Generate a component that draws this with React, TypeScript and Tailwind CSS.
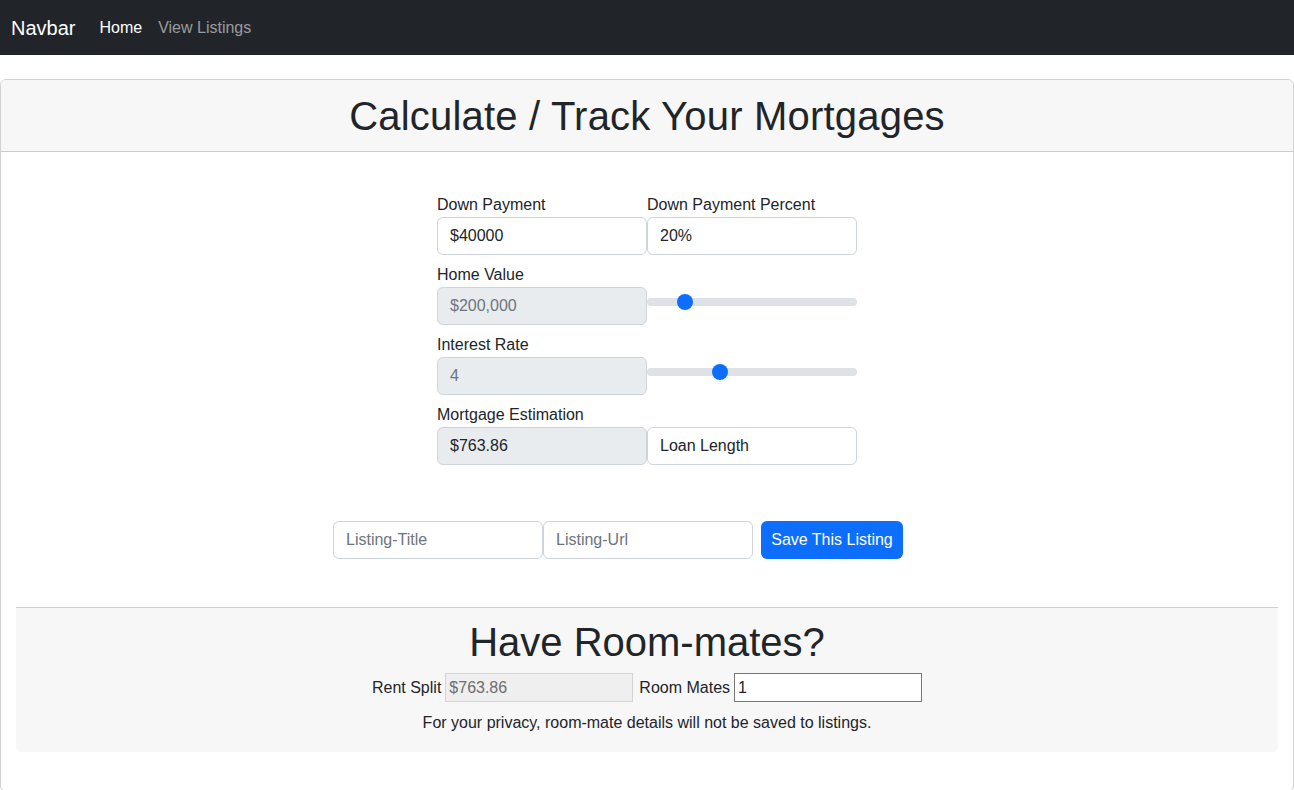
import React from "react";

const font = { fontFamily: '"Liberation Sans", Arial, sans-serif' };

function Slider({ pos }: { pos: number }) {
  return (
    <div className="relative h-[38px] w-[210px] pt-[11px]">
      <div className="h-2 w-full rounded-full bg-[#dee2e6]" />
      <div
        className="absolute top-[7px] h-4 w-4 rounded-full bg-[#0d6efd]"
        style={{ left: 8 + pos * 194 - 8 }}
      />
    </div>
  );
}

const inputBase =
  "h-[38px] w-[210px] rounded-[6px] border border-[#ced4da] px-3 text-base flex items-center";

export default function App() {
  return (
    <div className="min-h-[790px] bg-white text-[#212529]" style={font}>
      <nav className="flex h-[55px] items-center bg-[#212529] pl-[11px]">
        <span className="mr-6 text-xl text-white">Navbar</span>
        <span className="mr-4 text-base text-white">Home</span>
        <span className="text-base text-[rgba(255,255,255,0.55)]">View Listings</span>
      </nav>

      <div className="mt-6 rounded-[6px] border border-[rgba(0,0,0,0.175)]">
        <div className="flex h-[72px] items-center justify-center rounded-t-[6px] border-b border-[rgba(0,0,0,0.175)] bg-[#f7f7f7]">
          <h1 className="text-[40px] font-medium leading-[48px] tracking-[0.2px]">Calculate / Track Your Mortgages</h1>
        </div>

        <div className="px-[15px] pt-[41px] pb-[39px]">
          <div className="mx-auto flex w-[420px] flex-col gap-2">
            <div>
              <div className="flex">
                <label className="w-[210px] leading-6">Down Payment</label>
                <label className="w-[210px] leading-6">Down Payment Percent</label>
              </div>
              <div className="flex">
                <div className={inputBase + " bg-white"}>$40000</div>
                <div className={inputBase + " bg-white"}>20%</div>
              </div>
            </div>
            <div>
              <label className="block leading-6">Home Value</label>
              <div className="flex">
                <div className={inputBase + " bg-[#e9ecef] text-[#6c757d]"}>$200,000</div>
                <Slider pos={0.155} />
              </div>
            </div>
            <div>
              <label className="block leading-6">Interest Rate</label>
              <div className="flex">
                <div className={inputBase + " bg-[#e9ecef] text-[#6c757d]"}>4</div>
                <Slider pos={0.335} />
              </div>
            </div>
            <div>
              <label className="block leading-6">Mortgage Estimation</label>
              <div className="flex">
                <div className={inputBase + " bg-[#e9ecef]"}>$763.86</div>
                <div className={inputBase + " bg-white"}>Loan Length</div>
              </div>
            </div>
          </div>

          <div className="mt-14 flex justify-center">
            <div className="flex h-[38px] w-[210px] items-center rounded-[6px] border border-[#ced4da] bg-white px-3 text-[#6c757d]">Listing-Title</div>
            <div className="flex h-[38px] w-[210px] items-center rounded-[6px] border border-[#ced4da] bg-white px-3 text-[#6c757d]">Listing-Url</div>
            <div className="ml-2 flex h-[38px] w-[142px] items-center justify-center rounded-[6px] bg-[#0d6efd] text-white">Save This Listing</div>
            <div className="w-[58px]" />
          </div>

          <div className="mt-12 rounded-b-[6px] border-t border-[#cfcfcf] bg-[#f7f7f7] pt-[10px] pb-[17px] text-center">
            <h2 className="text-[40px] font-medium leading-[48px]">Have Room-mates?</h2>
            <div className="mt-[7px] flex items-center justify-center">
              <span className="mr-1">Rent Split</span>
              <div className="flex h-[29px] w-[188px] items-center border border-[#d4d4d4] bg-[#efefef] px-[3px] text-[#6d6d6d]">$763.86</div>
              <span className="ml-[6px] mr-1">Room Mates</span>
              <div className="flex h-[29px] w-[188px] items-center border border-[#767676] bg-white px-[3px]">1</div>
            </div>
            <p className="mt-[9px] leading-6">For your privacy, room-mate details will not be saved to listings.</p>
          </div>
        </div>
      </div>
    </div>
  );
}
